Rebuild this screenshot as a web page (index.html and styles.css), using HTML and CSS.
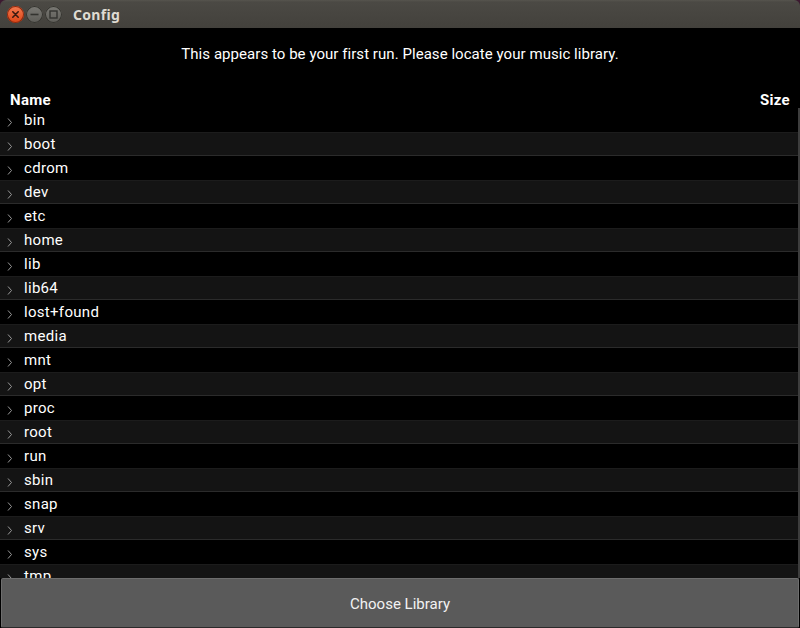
FILE: index.html
```html
<!DOCTYPE html>
<html>
<head>
<meta charset="utf-8">
<link rel="stylesheet" href="styles.css">
</head>
<body>
<div class="window">
  <div class="titlebar">
    <div class="controls">
      <span class="wbtn close"><svg width="17" height="17" viewBox="0 0 17 17"><path d="M5.8 5.8 L11.2 11.2 M11.2 5.8 L5.8 11.2" stroke="#3a1a10" stroke-width="1.6" stroke-linecap="round"/></svg></span>
      <span class="wbtn"><svg width="17" height="17" viewBox="0 0 17 17"><path d="M4.5 8.5 H12.5" stroke="#33332f" stroke-width="1.6"/></svg></span>
      <span class="wbtn"><svg width="17" height="17" viewBox="0 0 17 17"><rect x="5" y="5" width="7" height="7" fill="none" stroke="#33332f" stroke-width="1.4"/></svg></span>
    </div>
    <div class="title">Config</div>
  </div>
  <div class="content">
    <p class="message">This appears to be your first run. Please locate your music library.</p>
    <div class="tree">
      <div class="header"><span>Name</span><span>Size</span></div>
      <div class="rows">
        <div class="row"><svg class="chev" width="6" height="10" viewBox="0 0 6 10"><path d="M1 1.5 L4.5 5.5 L1 9.5" fill="none" stroke="#9a9a9a" stroke-width="1"/></svg><span>bin</span></div>
        <div class="row alt"><svg class="chev" width="6" height="10" viewBox="0 0 6 10"><path d="M1 1.5 L4.5 5.5 L1 9.5" fill="none" stroke="#9a9a9a" stroke-width="1"/></svg><span>boot</span></div>
        <div class="row"><svg class="chev" width="6" height="10" viewBox="0 0 6 10"><path d="M1 1.5 L4.5 5.5 L1 9.5" fill="none" stroke="#9a9a9a" stroke-width="1"/></svg><span>cdrom</span></div>
        <div class="row alt"><svg class="chev" width="6" height="10" viewBox="0 0 6 10"><path d="M1 1.5 L4.5 5.5 L1 9.5" fill="none" stroke="#9a9a9a" stroke-width="1"/></svg><span>dev</span></div>
        <div class="row"><svg class="chev" width="6" height="10" viewBox="0 0 6 10"><path d="M1 1.5 L4.5 5.5 L1 9.5" fill="none" stroke="#9a9a9a" stroke-width="1"/></svg><span>etc</span></div>
        <div class="row alt"><svg class="chev" width="6" height="10" viewBox="0 0 6 10"><path d="M1 1.5 L4.5 5.5 L1 9.5" fill="none" stroke="#9a9a9a" stroke-width="1"/></svg><span>home</span></div>
        <div class="row"><svg class="chev" width="6" height="10" viewBox="0 0 6 10"><path d="M1 1.5 L4.5 5.5 L1 9.5" fill="none" stroke="#9a9a9a" stroke-width="1"/></svg><span>lib</span></div>
        <div class="row alt"><svg class="chev" width="6" height="10" viewBox="0 0 6 10"><path d="M1 1.5 L4.5 5.5 L1 9.5" fill="none" stroke="#9a9a9a" stroke-width="1"/></svg><span>lib64</span></div>
        <div class="row"><svg class="chev" width="6" height="10" viewBox="0 0 6 10"><path d="M1 1.5 L4.5 5.5 L1 9.5" fill="none" stroke="#9a9a9a" stroke-width="1"/></svg><span>lost+found</span></div>
        <div class="row alt"><svg class="chev" width="6" height="10" viewBox="0 0 6 10"><path d="M1 1.5 L4.5 5.5 L1 9.5" fill="none" stroke="#9a9a9a" stroke-width="1"/></svg><span>media</span></div>
        <div class="row"><svg class="chev" width="6" height="10" viewBox="0 0 6 10"><path d="M1 1.5 L4.5 5.5 L1 9.5" fill="none" stroke="#9a9a9a" stroke-width="1"/></svg><span>mnt</span></div>
        <div class="row alt"><svg class="chev" width="6" height="10" viewBox="0 0 6 10"><path d="M1 1.5 L4.5 5.5 L1 9.5" fill="none" stroke="#9a9a9a" stroke-width="1"/></svg><span>opt</span></div>
        <div class="row"><svg class="chev" width="6" height="10" viewBox="0 0 6 10"><path d="M1 1.5 L4.5 5.5 L1 9.5" fill="none" stroke="#9a9a9a" stroke-width="1"/></svg><span>proc</span></div>
        <div class="row alt"><svg class="chev" width="6" height="10" viewBox="0 0 6 10"><path d="M1 1.5 L4.5 5.5 L1 9.5" fill="none" stroke="#9a9a9a" stroke-width="1"/></svg><span>root</span></div>
        <div class="row"><svg class="chev" width="6" height="10" viewBox="0 0 6 10"><path d="M1 1.5 L4.5 5.5 L1 9.5" fill="none" stroke="#9a9a9a" stroke-width="1"/></svg><span>run</span></div>
        <div class="row alt"><svg class="chev" width="6" height="10" viewBox="0 0 6 10"><path d="M1 1.5 L4.5 5.5 L1 9.5" fill="none" stroke="#9a9a9a" stroke-width="1"/></svg><span>sbin</span></div>
        <div class="row"><svg class="chev" width="6" height="10" viewBox="0 0 6 10"><path d="M1 1.5 L4.5 5.5 L1 9.5" fill="none" stroke="#9a9a9a" stroke-width="1"/></svg><span>snap</span></div>
        <div class="row alt"><svg class="chev" width="6" height="10" viewBox="0 0 6 10"><path d="M1 1.5 L4.5 5.5 L1 9.5" fill="none" stroke="#9a9a9a" stroke-width="1"/></svg><span>srv</span></div>
        <div class="row"><svg class="chev" width="6" height="10" viewBox="0 0 6 10"><path d="M1 1.5 L4.5 5.5 L1 9.5" fill="none" stroke="#9a9a9a" stroke-width="1"/></svg><span>sys</span></div>
        <div class="row alt"><svg class="chev" width="6" height="10" viewBox="0 0 6 10"><path d="M1 1.5 L4.5 5.5 L1 9.5" fill="none" stroke="#9a9a9a" stroke-width="1"/></svg><span>tmp</span></div>
      </div>
    </div>
    <button class="choose">Choose Library</button>
  </div>
</div>
</body>
</html>
```

FILE: styles.css
```css
* { box-sizing: border-box; }
html, body {
  margin: 0;
  padding: 0;
  width: 800px;
  height: 628px;
  overflow: hidden;
  background: #3c1a30;
}
.window {
  width: 800px;
  height: 628px;
  display: flex;
  flex-direction: column;
  font-family: Roboto, "Noto Sans", sans-serif;
}
.titlebar {
  height: 28px;
  flex: none;
  display: flex;
  align-items: center;
  background: linear-gradient(#56544e 0, #4b4944 2px, #43413c 100%);
  border-radius: 6px 6px 0 0;
  padding-left: 7px;
}
.controls {
  display: flex;
  gap: 2px;
}
.wbtn {
  width: 17px;
  height: 17px;
  border-radius: 50%;
  background: linear-gradient(#7a7974, #5d5c57);
  box-shadow: inset 0 0 0 1px #35342f;
  display: flex;
}
.wbtn.close {
  background: linear-gradient(#f47a50, #dc4516);
  box-shadow: inset 0 0 0 1px #8a2a10;
}
.title {
  margin-left: 11px;
  color: #dfdbd2;
  font-family: "Noto Sans", "DejaVu Sans", sans-serif;
  font-weight: 700;
  font-size: 14px;
  letter-spacing: 0.3px;
}
.content {
  flex: 1;
  background: #000;
  display: flex;
  flex-direction: column;
  min-height: 0;
}
.message {
  margin: 0;
  height: 62px;
  padding-top: 17px;
  text-align: center;
  color: #fff;
  font-size: 15px;
  letter-spacing: 0.05px;
}
.tree {
  flex: 1;
  min-height: 0;
  overflow: hidden;
  display: flex;
  flex-direction: column;
  color: #fff;
  font-size: 15px;
}
.header {
  height: 18px;
  flex: none;
  display: flex;
  justify-content: space-between;
  align-items: center;
  padding: 1px 10px 0 10px;
  font-weight: 700;
  letter-spacing: 0.3px;
}
.rows {
  flex: 1;
  min-height: 0;
  overflow: hidden;
  border-right: 2px solid #3d3d3d;
}
.row {
  height: 24px;
  display: flex;
  align-items: center;
  padding-left: 7px;
  letter-spacing: 0.3px;
}
.row.alt {
  background: #141414;
  border-top: 1px solid #1c1c1c;
  border-bottom: 1px solid #2b2b2b;
}
.chev {
  margin-top: 4px;
  margin-right: 11px;
  flex: none;
}
.choose {
  flex: none;
  height: 50px;
  margin: 0 1px;
  background: #5a5a5a;
  border: 1px solid #6e6e6e;
  border-bottom-color: #2a2a2a;
  border-radius: 2px;
  color: #f2f2f2;
  font-family: Roboto, "Noto Sans", sans-serif;
  font-size: 15px;
  padding: 2px 0 0 0;
}
```
